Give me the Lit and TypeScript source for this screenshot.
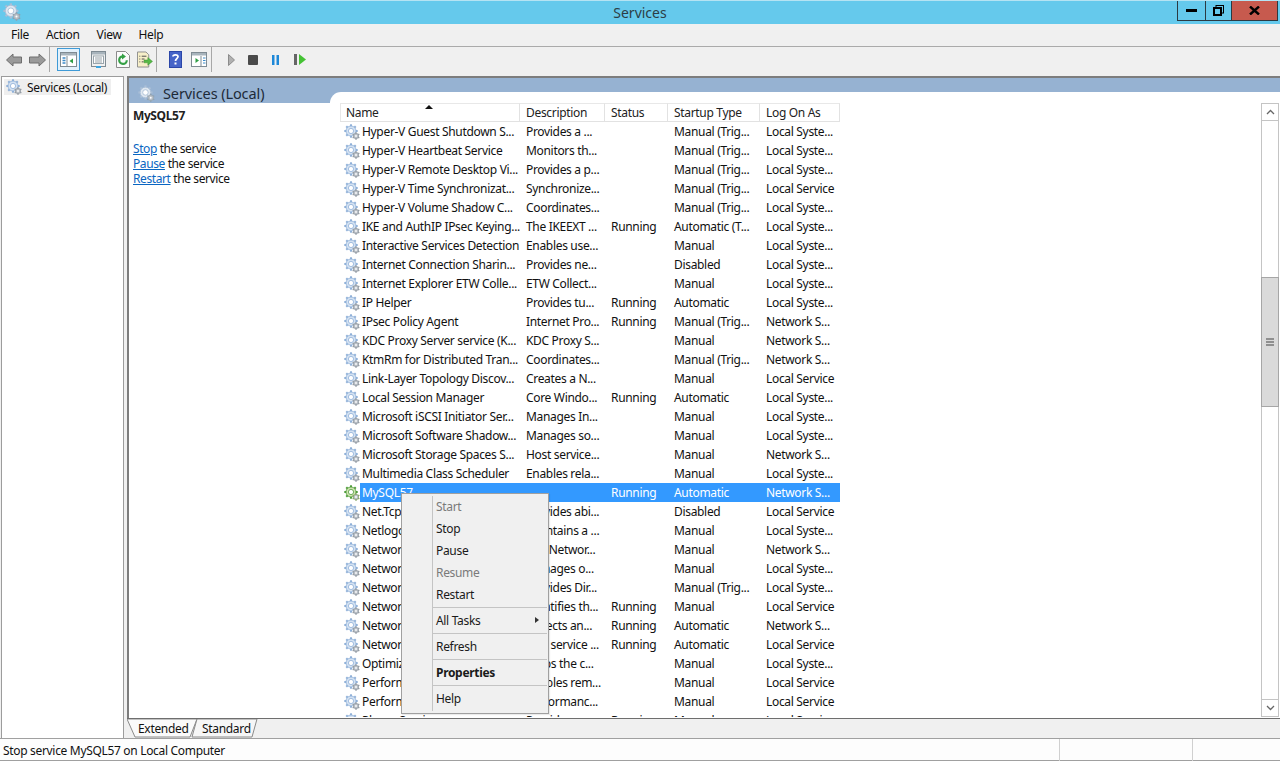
import { LitElement, html, css, svg } from "lit";
import { customElement } from "lit/decorators.js";

const gearTeeth = (cx: number, cy: number, r: number, n: number, w: number, color: string) => {
  const out = [];
  for (let i = 0; i < n; i++) {
    const a = (i * 360) / n;
    out.push(svg`<rect x=${cx - w / 2} y=${cy - r} width=${w} height=${r} fill=${color} transform="rotate(${a} ${cx} ${cy})"></rect>`);
  }
  return out;
};

const gear = (main = "#8fb0d8", rim = "#d4e2f2", small = "#8d959e", size = 16) => svg`
  <svg class="gear" width=${size} height=${size} viewBox="0 0 16 16">
    ${gearTeeth(7, 7, 6.7, 8, 2, main)}
    <circle cx="7" cy="7" r="5" fill=${rim} stroke=${main} stroke-width="0.8"></circle>
    <circle cx="7" cy="7" r="2.6" fill="#fff" stroke=${main} stroke-width="0.8"></circle>
    ${gearTeeth(12, 12, 3.8, 6, 1.3, small)}
    <circle cx="12" cy="12" r="2.7" fill="#b9bfc6" stroke=${small} stroke-width="0.6"></circle>
    <circle cx="12" cy="12" r="0.9" fill="#fff"></circle>
  </svg>`;

type Row = [string, string, string, string, string];
const ROWS: Row[] = [
  ["Hyper-V Guest Shutdown S...", "Provides a ...", "", "Manual (Trig...", "Local Syste..."],
  ["Hyper-V Heartbeat Service", "Monitors th...", "", "Manual (Trig...", "Local Syste..."],
  ["Hyper-V Remote Desktop Vi...", "Provides a p...", "", "Manual (Trig...", "Local Syste..."],
  ["Hyper-V Time Synchronizat...", "Synchronize...", "", "Manual (Trig...", "Local Service"],
  ["Hyper-V Volume Shadow C...", "Coordinates...", "", "Manual (Trig...", "Local Syste..."],
  ["IKE and AuthIP IPsec Keying...", "The IKEEXT ...", "Running", "Automatic (T...", "Local Syste..."],
  ["Interactive Services Detection", "Enables use...", "", "Manual", "Local Syste..."],
  ["Internet Connection Sharin...", "Provides ne...", "", "Disabled", "Local Syste..."],
  ["Internet Explorer ETW Colle...", "ETW Collect...", "", "Manual", "Local Syste..."],
  ["IP Helper", "Provides tu...", "Running", "Automatic", "Local Syste..."],
  ["IPsec Policy Agent", "Internet Pro...", "Running", "Manual (Trig...", "Network S..."],
  ["KDC Proxy Server service (K...", "KDC Proxy S...", "", "Manual", "Network S..."],
  ["KtmRm for Distributed Tran...", "Coordinates...", "", "Manual (Trig...", "Network S..."],
  ["Link-Layer Topology Discov...", "Creates a N...", "", "Manual", "Local Service"],
  ["Local Session Manager", "Core Windo...", "Running", "Automatic", "Local Syste..."],
  ["Microsoft iSCSI Initiator Ser...", "Manages In...", "", "Manual", "Local Syste..."],
  ["Microsoft Software Shadow...", "Manages so...", "", "Manual", "Local Syste..."],
  ["Microsoft Storage Spaces S...", "Host service...", "", "Manual", "Network S..."],
  ["Multimedia Class Scheduler", "Enables rela...", "", "Manual", "Local Syste..."],
  ["MySQL57", "", "Running", "Automatic", "Network S..."],
  ["Net.Tcp Port Sharing Ser...", "Provides abi...", "", "Disabled", "Local Service"],
  ["Netlogon", "Maintains a ...", "", "Manual", "Local Syste..."],
  ["Network Access Protection", "The Networ...", "", "Manual", "Network S..."],
  ["Network Connected Devices", "Manages o...", "", "Manual", "Local Syste..."],
  ["Network Connections", "Provides Dir...", "", "Manual (Trig...", "Local Syste..."],
  ["Network List Service", "Identifies th...", "Running", "Manual", "Local Service"],
  ["Network Location Awareness", "Collects an...", "Running", "Automatic", "Network S..."],
  ["Network Store Interface", "This service ...", "Running", "Automatic", "Local Service"],
  ["Optimize drives", "Helps the c...", "", "Manual", "Local Syste..."],
  ["Performance Counter DLL Host", "Enables rem...", "", "Manual", "Local Service"],
  ["Performance Logs & Alerts", "Performanc...", "", "Manual", "Local Service"],
  ["Phone Service", "Provides ...", "Running", "Manual", "Local Service"],
];

const HEADS = ["Name", "Description", "Status", "Startup Type", "Log On As"];

@customElement("app-root")
export class AppRoot extends LitElement {
  static styles = css`
    :host {
      display: flex;
      flex-direction: column;
      width: 1280px;
      height: 761px;
      overflow: hidden;
      background: #f0f0f0;
      color: #111;
      font: 12px/15px "Noto Sans", "Open Sans", sans-serif;
      letter-spacing: -0.32px;
    }
    .title {
      height: 24px;
      flex: none;
      background: #65c9ec;
      display: grid;
      grid-template-columns: 1fr auto 1fr;
      border-top: 1px solid #b5e3f3;
      box-sizing: border-box;
    }
    .title-icon { padding: 2px 0 0 3px; }
    .title-text { font-size: 14px; line-height: 23px; color: #2c3e46; letter-spacing: 0; }
    .wctl { display: flex; justify-content: flex-end; padding-right: 2px; align-items: flex-start; }
    .wbtn {
      height: 20px;
      box-sizing: border-box;
      border: 1px solid #2b3a42;
      border-top: none;
      margin-left: -1px;
      display: flex;
      align-items: center;
      justify-content: center;
    }
    .wmin { width: 29px; }
    .wres { width: 27px; }
    .wclose { width: 47px; background: #c75a4e; }
    .menu {
      flex: none;
      box-sizing: border-box;
      display: flex;
      gap: 17px;
      padding: 0 0 1px 11px;
      align-items: center;
      border-bottom: 1px solid #aaa;
      height: 23px;
      font-size: 12px;
    }
    .toolbar {
      height: 29px;
      flex: none;
      box-sizing: border-box;
      display: flex;
      align-items: center;
      padding: 0 0 4px 6px;
    }
    .toolbar svg { flex: none; display: block; }
    .sep { width: 1px; height: 25px; background: #a8a8a8; flex: none; }
    .active {
      width: 23px;
      height: 23px;
      box-sizing: border-box;
      border: 1px solid #3f9ad6;
      background: #e3f1fb;
      display: flex;
      align-items: center;
      justify-content: center;
      flex: none;
    }
    .ml3 { margin-left: 3px; }
    .ml4 { margin-left: 4px; }
    .ml7 { margin-left: 7px; }
    .ml9 { margin-left: 9px; }
    .ml10 { margin-left: 10px; }
    .ml11 { margin-left: 11px; }
    .ml12 { margin-left: 12px; }
    .ml13 { margin-left: 13px; }
    .ml14 { margin-left: 14px; }
    .ml15 { margin-left: 15px; }
    .ml16 { margin-left: 16px; }
    .main {
      flex: 1;
      min-height: 0;
      display: flex;
      padding-left: 1px;
      gap: 3px;
    }
    .tree {
      width: 123px;
      flex: none;
      box-sizing: border-box;
      background: #fff;
      border: 1px solid #9c9c9c;
      border-bottom: none;
      padding: 2px 0 0 2px;
    }
    .tree-item {
      width: 107px;
      height: 16px;
      background: #efefef;
      display: flex;
      align-items: center;
      gap: 5px;
      padding-left: 2px;
      box-sizing: border-box;
      white-space: nowrap;
    }
    .right {
      flex: 1;
      min-width: 0;
      display: flex;
      flex-direction: column;
      border-top: 2px solid #7d7d7d;
      position: relative;
    }
    .ext {
      flex: 1;
      min-height: 0;
      display: flex;
      border-left: 2px solid #7d7d7d;
      background: #fff;
    }
    .desc { width: 201px; flex: none; }
    .desc-head {
      height: 25px;
      background: #96b2d2;
      display: flex;
      align-items: center;
      gap: 8px;
      padding: 5px 0 0 9px;
      box-sizing: border-box;
      font-size: 14.5px;
      letter-spacing: -0.1px;
      color: #1d2a38;
    }
    .desc-body { padding: 5px 0 0 4px; letter-spacing: -0.4px; }
    .svc { font-weight: 700; margin-bottom: 18px; color: #222; }
    a { color: #0a66c2; text-decoration: underline; }
    .listwrap {
      flex: 1;
      min-width: 0;
      display: flex;
      flex-direction: column;
      background: linear-gradient(#96b2d2 24px, #fff 24px);
    }
    .listpane {
      margin-top: 14px;
      flex: 1;
      min-height: 0;
      background: #fff;
      border-top-left-radius: 11px;
      padding: 11px 0 0 10px;
      display: flex;
    }
    .list {
      flex: 1;
      min-width: 0;
      overflow: hidden;
      height: 614px;
    }
    .gridrow {
      display: grid;
      grid-template-columns: 180px 85px 63px 92px 80px;
      width: 500px;
      height: 19px;
      align-items: center;
    }
    .heads {
      border-bottom: 1px solid #e2e2e2;
      box-sizing: border-box;
      position: relative;
    }
    .hc {
      height: 18px;
      line-height: 17px;
      padding-left: 6px;
      border-right: 1px solid #e2e2e2;
      border-top: 1px solid #e8e8e8;
      box-sizing: border-box;
      color: #222;
    }
    .hc:first-child { border-left: 1px solid #e8e8e8; padding-left: 5px; }
    .caret {
      position: absolute;
      left: 85px;
      top: 2px;
      width: 0;
      height: 0;
      border: 4px solid transparent;
      border-top: none;
      border-bottom: 4px solid #111;
    }
    .c {
      white-space: nowrap;
      overflow: hidden;
      padding-left: 6px;
      box-sizing: border-box;
      height: 19px;
      line-height: 19px;
    }
    .c.n {
      padding-left: 0;
      display: flex;
      align-items: center;
      overflow: hidden;
    }
    .c.n .gear { margin-left: 4px; flex: none; }
    .nt { padding-left: 2px; height: 19px; flex: 1; min-width: 0; overflow: hidden; }
    .sel .nt, .sel .c:not(.n) { background: #3399ff; color: #fff; }
    .scroll {
      width: 18px;
      flex: none;
      display: flex;
      flex-direction: column;
      border: 1px solid #c4c4c4;
      border-top: none;
      border-bottom: none;
      box-sizing: border-box;
      margin-right: 1px;
      height: 614px;
    }
    .sb {
      height: 18px;
      flex: none;
      box-sizing: border-box;
      border: 1px solid #c4c4c4;
      border-left: none;
      border-right: none;
      display: flex;
      align-items: center;
      justify-content: center;
      background: #fff;
    }
    .track-a { height: 156px; flex: none; }
    .thumb {
      height: 130px;
      flex: none;
      background: #dadada;
      box-sizing: border-box;
      border: 1px solid #a6a6a6;
      margin: 0 -1px;
      display: flex;
      align-items: center;
      justify-content: center;
    }
    .track-b { flex: 1; }
    .tabs {
      height: 20px;
      flex: none;
      box-sizing: border-box;
      border-top: 1px solid #6e6e6e;
      background: #f0f0f0;
      display: flex;
      position: relative;
    }
    .tabs svg { position: absolute; left: 0; top: 0; }
    .tab { position: relative; line-height: 20px; }
    .tab1 { margin-left: 11px; width: 64px; }
    .tab2 { width: 60px; }
    .status {
      height: 23px;
      flex: none;
      box-sizing: border-box;
      background: #fdfdfd;
      border-top: 1px solid #a0a0a0;
      border-bottom: 1px solid #a0a0a0;
      display: grid;
      grid-template-columns: 1060px 133px 1fr;
    }
    .status > div { padding-left: 3px; line-height: 24px; border-right: 1px solid #d0d0d0; }
    .status > div:last-child { border-right: none; }
    .cm {
      position: absolute;
      left: 274px;
      top: 415px;
      width: 148px;
      height: 221px;
      box-sizing: border-box;
      background: #f0f0f0;
      border: 1px solid #a0a0a0;
      padding: 2px 0 0 0;
      box-shadow: 1px 1px 1px rgba(0, 0, 0, 0.08);
    }
    .cm::before {
      content: "";
      position: absolute;
      left: 30px;
      top: 2px;
      bottom: 2px;
      width: 1px;
      background: #c4c4c4;
    }
    .mi {
      height: 22px;
      line-height: 22px;
      padding-left: 34px;
      position: relative;
      color: #1a1a1a;
    }
    .mi.tall { height: 25px; line-height: 25px; }
    .mi.dis { color: #7a7a7a; }
    .mi.bold { font-weight: 700; }
    .ms { height: 1px; background: #c4c4c4; margin-left: 31px; margin-right: 1px; }
    .ms.first { margin-top: 1px; }
    .arr {
      position: absolute;
      right: 9px;
      top: 9px;
      width: 0;
      height: 0;
      border: 3.5px solid transparent;
      border-right: none;
      border-left: 4px solid #333;
    }
  `;

  private toolbar() {
    return html`<div class="toolbar">
      <svg width="16" height="14" viewBox="0 0 16 14"><path d="M0.5 7 7 1v3h8.5v6H7v3z" fill="#9a9a9a" stroke="#6f6f6f"/></svg>
      <svg class="ml7" width="17" height="14" viewBox="0 0 17 14"><path d="M16.5 7 10 1v3H.5v6H10v3z" fill="#9a9a9a" stroke="#6f6f6f"/></svg>
      <div class="sep ml3"></div>
      <div class="active ml7">
        <svg width="17" height="15" viewBox="0 0 17 15"><rect x=".5" y=".5" width="16" height="14" fill="#fff" stroke="#7f8b93"/><rect x="1" y="1" width="15" height="2.5" fill="#a8b4bc"/><path d="M7 4v10" stroke="#7f8b93"/><path d="M2.5 6h3M2.5 8.5h3M2.5 11h3" stroke="#3d8bc9" stroke-width="1.4"/><path d="M13 6.5v5L9.5 9z" fill="#2f9e44"/></svg>
      </div>
      <svg class="ml11" width="15" height="17" viewBox="0 0 15 17"><rect x=".5" y=".5" width="14" height="15" fill="#f1f1f1" stroke="#7f8b93"/><rect x="1" y="1" width="13" height="2.5" fill="#a8b4bc"/><rect x="2.5" y="5" width="10" height="7.5" fill="#fff" stroke="#9aa5ac"/><path d="M4 7h7M4 9h7M4 11h7" stroke="#7f8b93" stroke-width=".8"/><rect x="5" y="15" width="5" height="2" fill="#3da5e0"/></svg>
      <svg class="ml10" width="14" height="17" viewBox="0 0 14 17"><path d="M.5.5h9l4 4v12H.5z" fill="#fbfbfb" stroke="#8b8b8b"/><path d="M10.8 9.2A3.8 3.8 0 1 1 7 5.3" fill="none" stroke="#35a045" stroke-width="2.2"/><path d="M6 2.5l4 3-4 3z" fill="#35a045"/></svg>
      <svg class="ml7" width="16" height="17" viewBox="0 0 17 17"><path d="M.5.5h9l3 3v13H.5z" fill="#f7efc9" stroke="#8b8b8b"/><path d="M2.5 5h1M5 5h5M2.5 8h1M5 8h3M2.5 11h1M5 11h2" stroke="#444" stroke-width="1"/><path d="M7.5 9h4V6.5l5 4-5 4V12h-4z" fill="#57b947" stroke="#3a8e30" stroke-width=".5"/></svg>
      <div class="sep ml3"></div>
      <svg class="ml12" width="13" height="17" viewBox="0 0 13 17"><rect width="13" height="17" fill="#2b46a8"/><rect x="1" y="1" width="11" height="15" fill="#4664c8"/><path d="M4 5.5C4 3.5 9 3.2 9 5.6c0 2-2.5 2.2-2.5 4.4" fill="none" stroke="#fff" stroke-width="1.8"/><rect x="5.5" y="11.5" width="2" height="2" fill="#fff"/></svg>
      <svg class="ml9" width="16" height="15" viewBox="0 0 16 15"><rect x=".5" y=".5" width="15" height="14" fill="#fff" stroke="#7f8b93"/><rect x="1" y="1" width="14" height="2.5" fill="#a8b4bc"/><path d="M10 4v10" stroke="#7f8b93"/><path d="M12 6h2.5M12 8.5h2.5M12 11h2.5" stroke="#3d8bc9" stroke-width="1.2"/><path d="M4.5 6v5L8 8.500z" fill="#2f9e44"/></svg>
      <div class="sep ml4"></div>
      <svg class="ml16" width="7" height="12" viewBox="0 0 7 12"><path d="M.5.500 6.500 6l-6 5.500z" fill="#b0b0b0" stroke="#8c8c8c"/></svg>
      <svg class="ml13" width="10" height="10" viewBox="0 0 10 10"><rect width="10" height="10" rx="1" fill="#4a4a4a"/></svg>
      <svg class="ml14" width="7" height="10" viewBox="0 0 7 10"><rect width="2.500" height="10" fill="#1e88d8"/><rect x="4.500" width="2.500" height="10" fill="#1e88d8"/></svg>
      <svg class="ml15" width="12" height="11" viewBox="0 0 12 11"><rect width="3" height="11" fill="#666"/><path d="M5 0l7 5.500L5 11z" fill="#45c234"/></svg>
    </div>`;
  }

  private menu() {
    return html`<div class="cm">
      <div class="mi dis">Start</div>
      <div class="mi">Stop</div>
      <div class="mi">Pause</div>
      <div class="mi dis">Resume</div>
      <div class="mi">Restart</div>
      <div class="ms first"></div>
      <div class="mi tall">All Tasks<span class="arr"></span></div>
      <div class="ms"></div>
      <div class="mi tall">Refresh</div>
      <div class="ms"></div>
      <div class="mi tall bold">Properties</div>
      <div class="ms"></div>
      <div class="mi tall">Help</div>
    </div>`;
  }

  render() {
    return html`
      <div class="title">
        <div class="title-icon">${gear("#a9bed6", "#dfe7f0", "#8fa0ad", 18)}</div>
        <div class="title-text">Services</div>
        <div class="wctl">
          <div class="wbtn wmin"><svg width="11" height="4"><rect y="0" width="11" height="3" fill="#000"/></svg></div>
          <div class="wbtn wres"><svg width="11" height="11" viewBox="0 0 11 11"><rect x="3" y=".5" width="7.500" height="7.500" fill="none" stroke="#000"/><rect x="1" y="3" width="7" height="7" fill="#65c9ec" stroke="#000" stroke-width="2"/></svg></div>
          <div class="wbtn wclose"><svg width="11" height="9" viewBox="0 0 11 9"><path d="M1 .5l9 8M10 .5l-9 8" stroke="#000" stroke-width="2.400"/></svg></div>
        </div>
      </div>
      <div class="menu"><span>File</span><span>Action</span><span>View</span><span>Help</span></div>
      ${this.toolbar()}
      <div class="main">
        <div class="tree"><div class="tree-item">${gear()}<span>Services (Local)</span></div></div>
        <div class="right">
          <div class="ext">
            <div class="desc">
              <div class="desc-head">${gear("#a9bed6", "#dfe7f0", "#8fa0ad", 17)}<span>Services (Local)</span></div>
              <div class="desc-body">
                <div class="svc">MySQL57</div>
                <div><a>Stop</a> the service</div>
                <div><a>Pause</a> the service</div>
                <div><a>Restart</a> the service</div>
              </div>
            </div>
            <div class="listwrap">
              <div class="listpane">
                <div class="list">
                  <div class="gridrow heads">
                    ${HEADS.map((h) => html`<div class="hc">${h}</div>`)}
                    <span class="caret"></span>
                  </div>
                  ${ROWS.map((r) => {
                    const sel = r[0] === "MySQL57";
                    return html`<div class="gridrow ${sel ? "sel" : ""}">
                      <div class="c n">
                        ${sel ? gear("#4e9c3a", "#cfe3b0", "#7fa05a") : gear()}
                        <div class="nt">${r[0]}</div>
                      </div>
                      <div class="c">${r[1]}</div>
                      <div class="c">${r[2]}</div>
                      <div class="c">${r[3]}</div>
                      <div class="c">${r[4]}</div>
                    </div>`;
                  })}
                </div>
                <div class="scroll">
                  <div class="sb"><svg width="9" height="6" viewBox="0 0 9 6"><path d="M1 5l3.500-3.500L8 5" fill="none" stroke="#666" stroke-width="1.300"/></svg></div>
                  <div class="track-a"></div>
                  <div class="thumb"><svg width="8" height="8"><path d="M0 1h8M0 4h8M0 7h8" stroke="#777" stroke-width="1.500"/></svg></div>
                  <div class="track-b"></div>
                  <div class="sb"><svg width="9" height="6" viewBox="0 0 9 6"><path d="M1 1l3.500 3.500L8 1" fill="none" stroke="#666" stroke-width="1.300"/></svg></div>
                </div>
              </div>
            </div>
          </div>
          <div class="tabs">
            <svg width="140" height="19" viewBox="0 0 140 19">
              <path d="M0 0l8 18h55l7-18z" fill="#fafafa" stroke="#8a8a8a" stroke-width="1"/>
              <path d="M70 0l-5 18h60l5-18z" fill="#f6f6f6" stroke="#8a8a8a" stroke-width="1"/>
            </svg>
            <div class="tab tab1">Extended</div>
            <div class="tab tab2">Standard</div>
          </div>
          ${this.menu()}
        </div>
      </div>
      <div class="status"><div>Stop service MySQL57 on Local Computer</div><div></div><div></div></div>
    `;
  }
}
